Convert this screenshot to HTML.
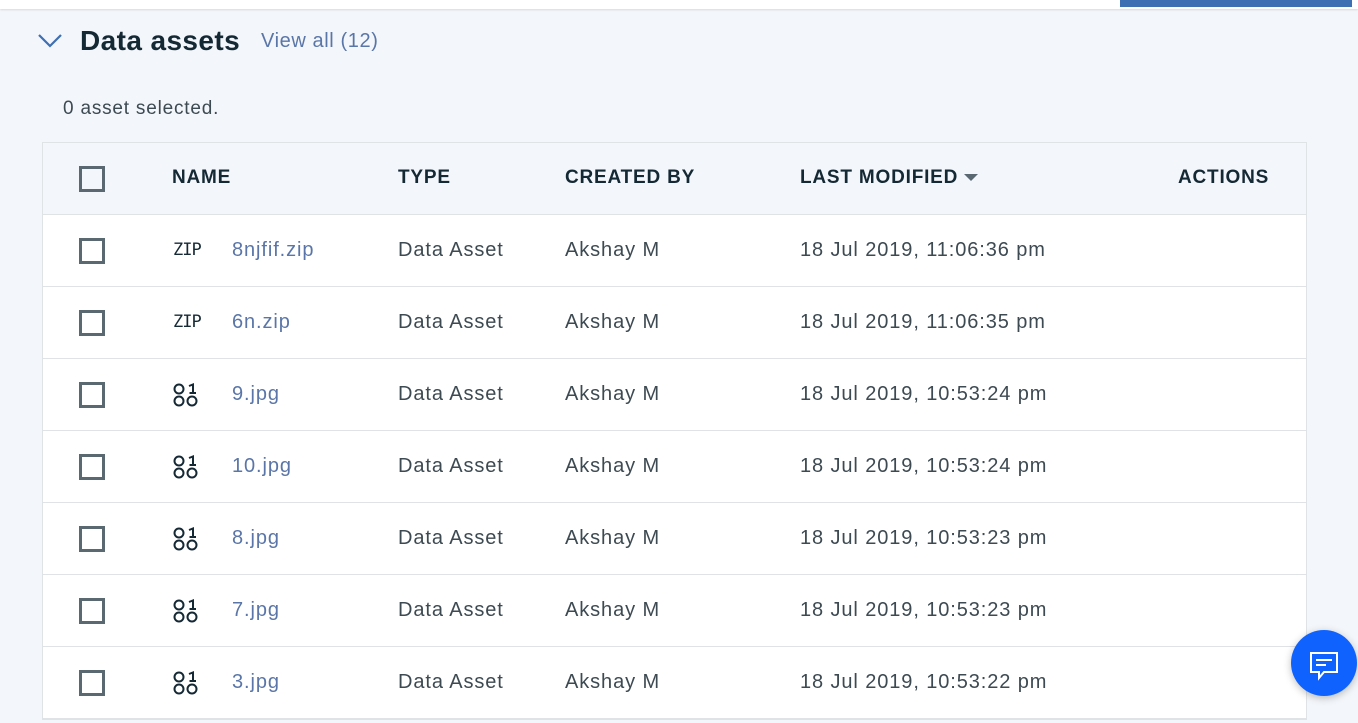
<!DOCTYPE html>
<html><head><style>
*{margin:0;padding:0;box-sizing:border-box}
body{width:1358px;height:723px;overflow:hidden;background:#f3f6fa;font-family:"Liberation Sans",sans-serif;position:relative;color:#152935}
.top{position:absolute;left:0;top:0;width:1358px;height:9px;background:#fff;box-shadow:0 1px 2px rgba(0,0,0,.12)}
.blue{position:absolute;left:1120px;top:0;width:232px;height:7px;background:#3d70b2}
.chev{position:absolute;left:37px;top:32px}
h1{position:absolute;left:80px;top:25px;font-size:28px;font-weight:bold;color:#152935;letter-spacing:0.4px}
.va{position:absolute;left:261px;top:30px;font-size:20px;color:#5a76a8;letter-spacing:0.6px}
.sel{position:absolute;left:63px;top:98px;font-size:19px;color:#3d4a52;letter-spacing:0.8px}
.tbl{position:absolute;left:42px;top:142px;width:1265px;border:1px solid #dfe3e6;background:#fff}
.hd{height:72px;background:#f3f6fa;border-bottom:1px solid #dfe3e6;position:relative}
.row{height:72px;border-bottom:1px solid #dfe3e6;position:relative}
.c{position:absolute;top:0;line-height:70px;font-size:20px;color:#3d4a52;white-space:nowrap;letter-spacing:0.9px}
.hd .c{font-weight:bold;color:#152935;font-size:19px;letter-spacing:0.8px;left:auto}
.cb{position:absolute;left:36px;top:23px;width:26px;height:26px;border:3px solid #5a6872}
.nm{color:#5a76a8}
.zip{position:absolute;left:130px;top:25px;font-family:"DejaVu Sans Mono",monospace;font-size:17px;color:#152935;letter-spacing:-1px}
.ic{position:absolute;left:129px;top:23px}
.chat{position:absolute;left:1291px;top:630px;width:66px;height:66px;border-radius:50%;background:#0f62fe;box-shadow:0 2px 8px rgba(0,0,0,.25)}
</style></head><body>
<div class="top"></div><div class="blue"></div>
<svg class="chev" width="26" height="18" viewBox="0 0 26 18"><path d="M2 3 L13 14 L24 3" fill="none" stroke="#3d70b2" stroke-width="2.2"/></svg>
<h1>Data assets</h1>
<div class="va">View all (12)</div>
<div class="sel">0 asset selected.</div>
<div class="tbl">
<div class="hd"><div class="cb"></div>
<div class="c" style="left:129px">NAME</div><div class="c" style="left:355px">TYPE</div><div class="c" style="left:522px">CREATED BY</div><div class="c" style="left:757px">LAST MODIFIED <span style="display:inline-block;width:0;height:0;border-left:7px solid transparent;border-right:7px solid transparent;border-top:7px solid #5a6872;vertical-align:middle;margin-left:0"></span></div><div class="c" style="left:1135px">ACTIONS</div></div>
<div class="row"><div class="cb"></div><div class="zip">ZIP</div><div class="c nm" style="left:189px">8njfif.zip</div><div class="c" style="left:355px">Data Asset</div><div class="c" style="left:522px">Akshay M</div><div class="c" style="left:757px">18 Jul 2019, 11:06:36 pm</div></div>
<div class="row"><div class="cb"></div><div class="zip">ZIP</div><div class="c nm" style="left:189px">6n.zip</div><div class="c" style="left:355px">Data Asset</div><div class="c" style="left:522px">Akshay M</div><div class="c" style="left:757px">18 Jul 2019, 11:06:35 pm</div></div>
<div class="row"><div class="cb"></div><svg class="ic" width="28" height="26"><g fill="none" stroke="#152935" stroke-width="2"><circle cx="7" cy="7" r="4.5"/><circle cx="7" cy="19" r="4.5"/><circle cx="20" cy="19" r="4.5"/><path d="M17 4 L21 2.5 L21 11 M17.5 11 L24 11"/></g></svg><div class="c nm" style="left:189px">9.jpg</div><div class="c" style="left:355px">Data Asset</div><div class="c" style="left:522px">Akshay M</div><div class="c" style="left:757px">18 Jul 2019, 10:53:24 pm</div></div>
<div class="row"><div class="cb"></div><svg class="ic" width="28" height="26"><g fill="none" stroke="#152935" stroke-width="2"><circle cx="7" cy="7" r="4.5"/><circle cx="7" cy="19" r="4.5"/><circle cx="20" cy="19" r="4.5"/><path d="M17 4 L21 2.5 L21 11 M17.5 11 L24 11"/></g></svg><div class="c nm" style="left:189px">10.jpg</div><div class="c" style="left:355px">Data Asset</div><div class="c" style="left:522px">Akshay M</div><div class="c" style="left:757px">18 Jul 2019, 10:53:24 pm</div></div>
<div class="row"><div class="cb"></div><svg class="ic" width="28" height="26"><g fill="none" stroke="#152935" stroke-width="2"><circle cx="7" cy="7" r="4.5"/><circle cx="7" cy="19" r="4.5"/><circle cx="20" cy="19" r="4.5"/><path d="M17 4 L21 2.5 L21 11 M17.5 11 L24 11"/></g></svg><div class="c nm" style="left:189px">8.jpg</div><div class="c" style="left:355px">Data Asset</div><div class="c" style="left:522px">Akshay M</div><div class="c" style="left:757px">18 Jul 2019, 10:53:23 pm</div></div>
<div class="row"><div class="cb"></div><svg class="ic" width="28" height="26"><g fill="none" stroke="#152935" stroke-width="2"><circle cx="7" cy="7" r="4.5"/><circle cx="7" cy="19" r="4.5"/><circle cx="20" cy="19" r="4.5"/><path d="M17 4 L21 2.5 L21 11 M17.5 11 L24 11"/></g></svg><div class="c nm" style="left:189px">7.jpg</div><div class="c" style="left:355px">Data Asset</div><div class="c" style="left:522px">Akshay M</div><div class="c" style="left:757px">18 Jul 2019, 10:53:23 pm</div></div>
<div class="row"><div class="cb"></div><svg class="ic" width="28" height="26"><g fill="none" stroke="#152935" stroke-width="2"><circle cx="7" cy="7" r="4.5"/><circle cx="7" cy="19" r="4.5"/><circle cx="20" cy="19" r="4.5"/><path d="M17 4 L21 2.5 L21 11 M17.5 11 L24 11"/></g></svg><div class="c nm" style="left:189px">3.jpg</div><div class="c" style="left:355px">Data Asset</div><div class="c" style="left:522px">Akshay M</div><div class="c" style="left:757px">18 Jul 2019, 10:53:22 pm</div></div>
</div>
<div class="chat"><svg width="66" height="66"><g fill="none" stroke="#fff" stroke-width="2"><path d="M20 23 H46 V42 H33 L28 48 V42 H20 Z"/><path d="M25 30 H41 M25 35 H35"/></g></svg></div>
</body></html>
